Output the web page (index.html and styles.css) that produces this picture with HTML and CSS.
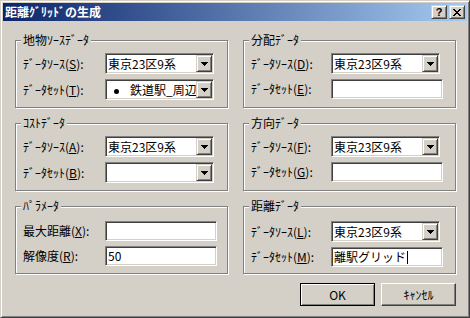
FILE: index.html
```html
<!DOCTYPE html>
<html lang="ja">
<head>
    <meta charset="UTF-8">
    <title>距離ｸﾞﾘｯﾄﾞの生成</title>
    <link rel="stylesheet" href="styles.css">
</head>
<body>
    <div class="window">
        <div class="titlebar">
            <span class="title">距離ｸﾞﾘｯﾄﾞの生成</span>
            <div class="caption-buttons">
                <div class="caption-btn help">?</div>
                <div class="caption-btn close">
                    <svg width="8" height="7" viewBox="0 0 8 7"><path d="M0 0h2v1h-2z M6 0h2v1h-2z M1 1h2v1h-2z M5 1h2v1h-2z M2 2h4v1h-4z M3 3h2v1h-2z M2 4h4v1h-4z M1 5h2v1h-2z M5 5h2v1h-2z M0 6h2v1h-2z M6 6h2v1h-2z" fill="#000"/></svg>
                </div>
            </div>
        </div>

        <div class="content">
            <div class="groups">
                <div class="group">
                    <span class="group-title">地物ｿｰｽﾃﾞｰﾀ</span>
                    <div class="field">
                        <label class="field-label">ﾃﾞｰﾀｿｰｽ(<u>S</u>):</label>
                        <div class="combo"><span class="combo-text">東京23区9系</span><span class="combo-btn"></span></div>
                    </div>
                    <div class="field">
                        <label class="field-label">ﾃﾞｰﾀｾｯﾄ(<u>T</u>):</label>
                        <div class="combo"><span class="combo-text"><span class="bullet"></span>鉄道駅_周辺</span><span class="combo-btn"></span></div>
                    </div>
                </div>

                <div class="group right">
                    <span class="group-title">分配ﾃﾞｰﾀ</span>
                    <div class="field">
                        <label class="field-label">ﾃﾞｰﾀｿｰｽ(<u>D</u>):</label>
                        <div class="combo"><span class="combo-text">東京23区9系</span><span class="combo-btn"></span></div>
                    </div>
                    <div class="field">
                        <label class="field-label">ﾃﾞｰﾀｾｯﾄ(<u>E</u>):</label>
                        <div class="edit"></div>
                    </div>
                </div>

                <div class="group">
                    <span class="group-title">ｺｽﾄﾃﾞｰﾀ</span>
                    <div class="field">
                        <label class="field-label">ﾃﾞｰﾀｿｰｽ(<u>A</u>):</label>
                        <div class="combo"><span class="combo-text">東京23区9系</span><span class="combo-btn"></span></div>
                    </div>
                    <div class="field">
                        <label class="field-label">ﾃﾞｰﾀｾｯﾄ(<u>B</u>):</label>
                        <div class="combo"><span class="combo-text"></span><span class="combo-btn"></span></div>
                    </div>
                </div>

                <div class="group right">
                    <span class="group-title">方向ﾃﾞｰﾀ</span>
                    <div class="field">
                        <label class="field-label">ﾃﾞｰﾀｿｰｽ(<u>F</u>):</label>
                        <div class="combo"><span class="combo-text">東京23区9系</span><span class="combo-btn"></span></div>
                    </div>
                    <div class="field">
                        <label class="field-label">ﾃﾞｰﾀｾｯﾄ(<u>G</u>):</label>
                        <div class="edit"></div>
                    </div>
                </div>

                <div class="group low">
                    <span class="group-title">ﾊﾟﾗﾒｰﾀ</span>
                    <div class="field">
                        <label class="field-label">最大距離(<u>X</u>):</label>
                        <div class="edit"></div>
                    </div>
                    <div class="field">
                        <label class="field-label">解像度(<u>R</u>):</label>
                        <div class="edit">50</div>
                    </div>
                </div>

                <div class="group right low">
                    <span class="group-title">距離ﾃﾞｰﾀ</span>
                    <div class="field">
                        <label class="field-label">ﾃﾞｰﾀｿｰｽ(<u>L</u>):</label>
                        <div class="combo"><span class="combo-text">東京23区9系</span><span class="combo-btn"></span></div>
                    </div>
                    <div class="field">
                        <label class="field-label">ﾃﾞｰﾀｾｯﾄ(<u>M</u>):</label>
                        <div class="edit">離駅グリッド<span class="caret"></span></div>
                    </div>
                </div>
            </div>

            <div class="actions">
                <div class="btn default">OK</div>
                <div class="btn">ｷｬﾝｾﾙ</div>
            </div>
        </div>
    </div>
</body>
</html>
```

FILE: styles.css
```css
body {
    margin: 0;
    font-family: "Noto Sans CJK JP", sans-serif;
    font-size: 12px;
    color: #000;
}

.window {
    width: 470px;
    height: 318px;
    box-sizing: border-box;
    background: #d4d0c8;
    border: 1px solid;
    border-color: #d4d0c8 #404040 #404040 #d4d0c8;
    box-shadow: inset 1px 1px #fff, inset -1px -1px #808080;
    padding: 2px;
}

.titlebar {
    height: 18px;
    display: flex;
    align-items: center;
    justify-content: space-between;
    padding-left: 2px;
    background: linear-gradient(to right, #0a246a, #a6caf0);
}

.title {
    color: #fff;
    font-weight: bold;
    line-height: 18px;
}

.caption-buttons {
    display: flex;
    gap: 2px;
    margin-right: 2px;
}

.caption-btn {
    width: 16px;
    height: 14px;
    box-sizing: border-box;
    background: #d4d0c8;
    border: 1px solid;
    border-color: #d4d0c8 #404040 #404040 #d4d0c8;
    box-shadow: inset 1px 1px #fff, inset -1px -1px #808080;
    display: flex;
    align-items: center;
    justify-content: center;
}

.caption-btn.help {
    font-family: "Liberation Sans", sans-serif;
    font-weight: bold;
    font-size: 11px;
    line-height: 12px;
}

.caption-btn svg {
    display: block;
}

.content {
    padding: 19px 11px 0 12px;
}

.groups {
    display: grid;
    grid-template-columns: 213px 213px;
    column-gap: 15px;
    row-gap: 15px;
}

.group {
    position: relative;
    height: 68px;
    box-sizing: border-box;
    border: 1px solid #808080;
    box-shadow: inset 1px 1px #fff, 1px 1px #fff;
    padding: 12px 0 0 7px;
}

.group.low {
    padding-top: 14px;
}

.group-title {
    position: absolute;
    top: -8px;
    left: 5px;
    padding: 0 2px;
    background: #d4d0c8;
    line-height: 14px;
}

.field {
    display: flex;
    align-items: center;
}

.field + .field {
    margin-top: 5px;
}

.field-label {
    width: 82px;
    line-height: 16px;
}

.right .field-label {
    width: 80px;
}

.combo,
.edit {
    box-sizing: border-box;
    background: #fff;
    border: 1px solid;
    border-color: #808080 #fff #fff #808080;
    box-shadow: inset 1px 1px #404040, inset -1px -1px #d4d0c8;
    padding: 1px;
}

.combo {
    width: 109px;
    height: 21px;
    display: flex;
}

.combo-text {
    flex: 1;
    overflow: hidden;
    white-space: nowrap;
    line-height: 17px;
    padding-left: 1px;
}

.combo-btn {
    width: 16px;
    height: 17px;
    flex: none;
    box-sizing: border-box;
    background: #d4d0c8 url("data:image/svg+xml;utf8,<svg xmlns='http://www.w3.org/2000/svg' width='7' height='4'><path d='M0 0h7v1h-1v1h-1v1h-1v1h-1v-1h-1v-1h-1v-1h-1z' fill='black'/></svg>") no-repeat 50% 50%;
    border: 1px solid;
    border-color: #d4d0c8 #404040 #404040 #d4d0c8;
    box-shadow: inset 1px 1px #fff, inset -1px -1px #808080;
}

.bullet {
    display: inline-block;
    width: 5px;
    height: 5px;
    border-radius: 50%;
    background: #000;
    margin: 0 11px 1px 6px;
    vertical-align: middle;
}

.edit {
    width: 112px;
    height: 20px;
    line-height: 16px;
    padding-left: 2px;
    white-space: nowrap;
    overflow: hidden;
}

.caret {
    display: inline-block;
    width: 1px;
    height: 13px;
    background: #000;
    vertical-align: -2px;
    margin-left: 1px;
}

.actions {
    display: flex;
    justify-content: flex-end;
    gap: 6px;
    margin-top: 9px;
}

.btn {
    width: 75px;
    height: 23px;
    box-sizing: border-box;
    border: 1px solid;
    border-color: #fff #404040 #404040 #fff;
    box-shadow: inset -1px -1px #808080;
    display: flex;
    align-items: center;
    justify-content: center;
    line-height: 14px;
}

.btn.default {
    border-color: #000;
    box-shadow: inset 1px 1px #fff, inset -1px -1px #808080;
}
```
